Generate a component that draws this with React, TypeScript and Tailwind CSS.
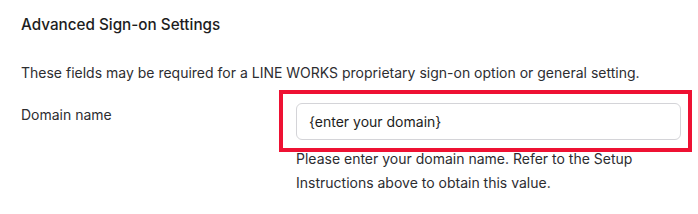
export default function App() {
    return (
        <div className="w-[698px] h-[214px] bg-white pt-[15px] pl-[21px] text-[#1d1d21]" style={{ fontFamily: 'Inter, "Noto Sans", sans-serif' }}>
            <h2 className="text-[15.25px] leading-[20px] font-medium">Advanced Sign-on Settings</h2>
            <p className="mt-[28px] text-[14px] leading-[20px] text-[#2d2d31]">
                These fields may be required for a LINE WORKS proprietary sign-on option or general setting.
            </p>
            <div className="mt-[20px] flex">
                <label className="w-[275px] shrink-0 pt-[2px] text-[14px] leading-[20px] text-[#2d2d31]">Domain name</label>
                <div className="w-[385px] shrink-0">
                    <div className="relative">
                        <input
                            type="text"
                            defaultValue="{enter your domain}"
                            className="w-full h-[37px] rounded-[6px] border border-[#d4d4d8] px-[12px] text-[14px] text-[#1d1d21] outline-none"
                        />
                        <div className="absolute -left-[17px] -right-[11px] -top-[13px] -bottom-[12px] border-4 border-[#ee1133] pointer-events-none" />
                    </div>
                    <p className="mt-[7px] text-[14px] leading-[24px] text-[#2d2d31]">
                        Please enter your domain name. Refer to the Setup Instructions above to obtain this value.
                    </p>
                </div>
            </div>
        </div>
    );
}
